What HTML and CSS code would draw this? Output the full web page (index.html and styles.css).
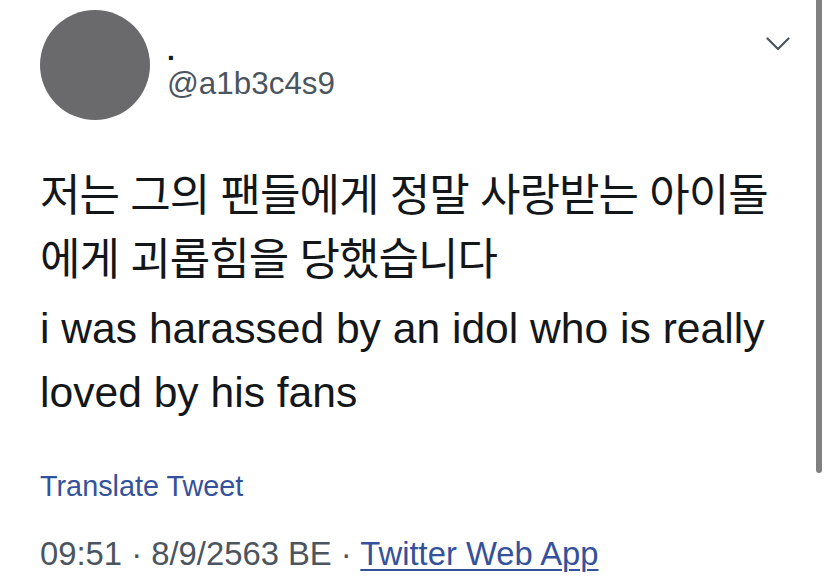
FILE: index.html
```html
<!DOCTYPE html>
<html lang="ko">
<head>
<meta charset="utf-8">
<title>Tweet</title>
<link rel="stylesheet" href="styles.css">
</head>
<body>
<div class="page">
  <main class="tweet">
    <header class="head">
      <div class="avatar"></div>
      <div class="ident">
        <div class="name">.</div>
        <div class="handle">@a1b3c4s9</div>
      </div>
      <svg class="caret" width="24" height="14" viewBox="0 0 24 14" aria-hidden="true">
        <polyline points="1.5,1.5 12,12 22.5,1.5" fill="none" stroke="#4a5560" stroke-width="2.2" stroke-linecap="round" stroke-linejoin="round"/>
      </svg>
    </header>
    <div class="text">
      <div class="ko">저는 그의 팬들에게 정말 사랑받는 아이돌<br>에게 괴롭힘을 당했습니다</div>
      <div class="en">i was harassed by an idol who is really loved by his fans</div>
    </div>
    <a class="translate">Translate Tweet</a>
    <div class="meta">09:51 · 8/9/2563 BE · <a class="source">Twitter Web App</a></div>
  </main>
  <div class="bar"></div>
</div>
</body>
</html>
```
FILE: styles.css
```css
html, body {
  margin: 0;
  padding: 0;
  background: #ffffff;
}
body {
  width: 827px;
  height: 580px;
  overflow: hidden;
  font-family: "Liberation Sans", Arial, sans-serif;
  color: #14171a;
}
.page {
  display: flex;
  align-items: flex-start;
  height: 580px;
}
.tweet {
  flex: 1;
  padding: 10px 26px 0 40px;
  display: flex;
  flex-direction: column;
  align-items: flex-start;
}
.bar {
  width: 6px;
  height: 473px;
  background: #808080;
  border-radius: 0 0 3px 3px;
  margin-right: 5px;
}
.head {
  display: flex;
  align-items: flex-start;
  align-self: stretch;
}
.avatar {
  width: 110px;
  height: 110px;
  border-radius: 50%;
  background: #6a696b;
  flex-shrink: 0;
}
.ident {
  margin-left: 17px;
  padding-top: 27px;
}
.name {
  font-size: 28px;
  font-weight: bold;
  line-height: 28px;
  color: #14171a;
}
.handle {
  margin-top: 2px;
  font-size: 31.4px;
  line-height: 34px;
  color: #4b5560;
}
.caret {
  margin-left: auto;
  margin-top: 27px;
}
.text {
  margin-top: 40px;
}
.ko {
  font-family: "Noto Sans CJK KR", sans-serif;
  font-size: 44px;
  letter-spacing: -1px;
  line-height: 64px;
  color: #14171a;
}
.en {
  font-size: 42.6px;
  line-height: 64px;
  color: #14171a;
  margin-top: 8px;
}
.translate {
  margin-top: 45px;
  font-size: 28.8px;
  line-height: 34px;
  color: #34529c;
  text-decoration: none;
}
.meta {
  margin-top: 31px;
  font-size: 32.8px;
  line-height: 40px;
  color: #4b5560;
  white-space: nowrap;
}
.source {
  color: #34529c;
  text-decoration: underline;
  text-decoration-thickness: 2px;
  text-underline-offset: 4px;
}
```
